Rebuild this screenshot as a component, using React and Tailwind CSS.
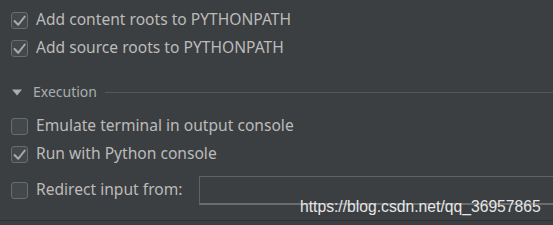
import React from "react";

function Check({ checked }) {
  return (
    <div className="w-[17px] h-[17px] shrink-0 rounded-[3px] border border-[#6b6b6b] bg-[#43494a] relative">
      {checked && (
        <svg width="17" height="17" viewBox="0 0 17 17" className="absolute left-[-1px] top-[-1px]">
          <polyline points="3.5,9 7.2,12.8 13.8,4.5" fill="none" stroke="#a9a9a9" strokeWidth="2" strokeLinecap="round" strokeLinejoin="round" />
        </svg>
      )}
    </div>
  );
}

function Row({ checked, label, h = "h-[28px]", labelW = "", children }) {
  return (
    <div className={`flex items-center ${h} pl-[11px]`}>
      <Check checked={checked} />
      <span className={`ml-[8px] text-[15.6px] text-[#bbbbbb] whitespace-nowrap leading-none ${labelW}`}>{label}</span>
      {children}
    </div>
  );
}

export default function App() {
  return (
    <div
      className="relative w-[553px] h-[225px] bg-[#3c3f41] overflow-hidden"
      style={{ fontFamily: '"Noto Sans", "Open Sans", sans-serif' }}
    >
      <div className="flex flex-col pt-[6px]">
        <Row checked label="Add content roots to PYTHONPATH" />
        <Row checked label="Add source roots to PYTHONPATH" />
        <div className="h-[16px]" />
        <div className="flex items-center h-[28px] pl-[12px]">
          <svg width="10" height="7" viewBox="0 0 10 7" className="shrink-0">
            <polygon points="0,0.5 10,0.5 5,6.5" fill="#a8adb0" />
          </svg>
          <span className="ml-[11px] text-[14px] text-[#a8adb0] leading-none whitespace-nowrap">Execution</span>
          <div className="flex-1 h-px bg-[#55585a] ml-[8px]" />
        </div>
        <div className="h-[6px]" />
        <Row label="Emulate terminal in output console" />
        <Row checked label="Run with Python console" />
        <div className="h-[6px]" />
        <Row label="Redirect input from:" h="h-[32px]" labelW="w-[163px] shrink-0">
          <div className="w-[380px] shrink-0 h-[29px] border border-[#5f6163] border-b-2 border-b-[#6a6c6e] bg-[#3c3f41]" />
        </Row>
        <div className="h-[14px]" />
        <div className="h-px bg-[#2f3133]" />
      </div>
      <div
        className="absolute left-[300px] top-[197px] text-[15.7px] leading-[20px] text-[#e6e6e6] whitespace-nowrap"
        style={{ fontFamily: '"Liberation Sans", Arial, sans-serif' }}
      >
        https://blog.csdn.net/qq_36957865
      </div>
    </div>
  );
}
